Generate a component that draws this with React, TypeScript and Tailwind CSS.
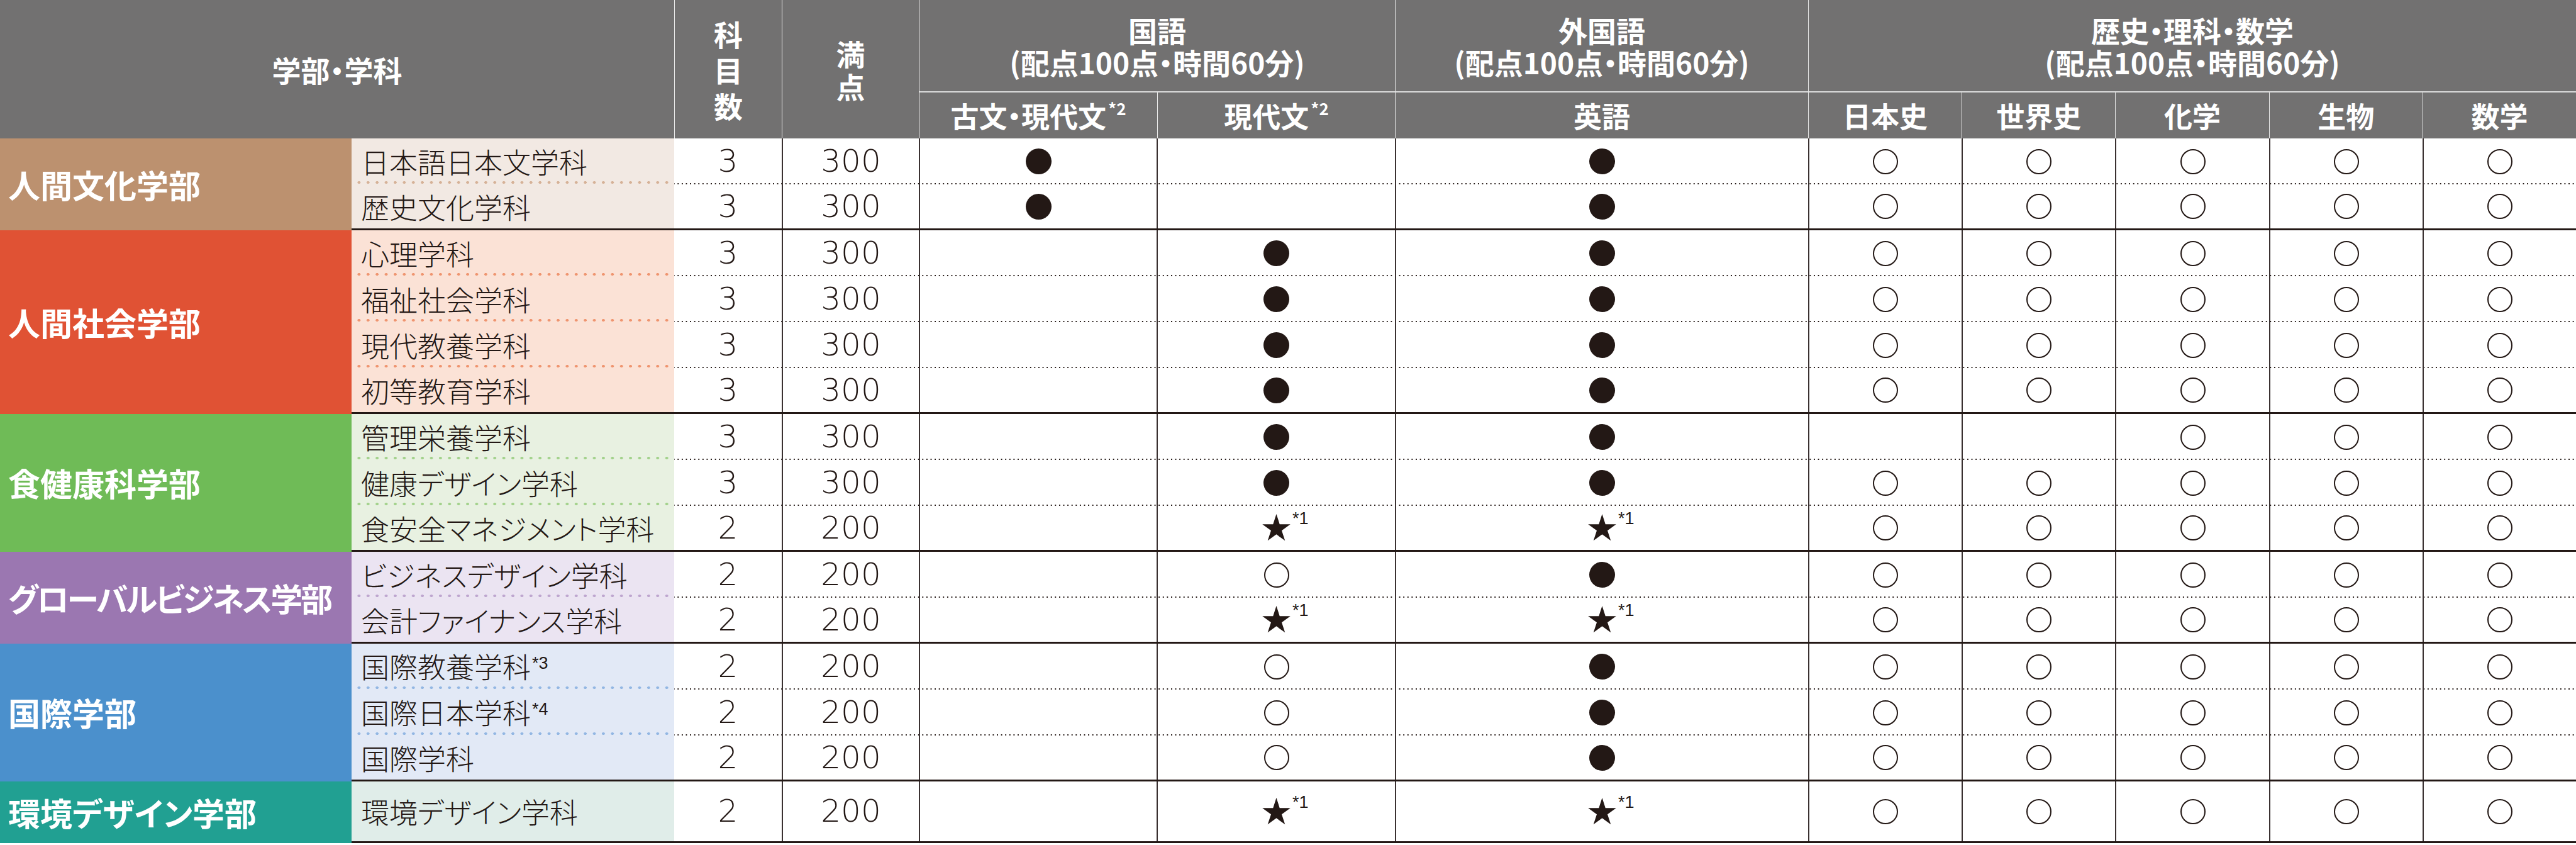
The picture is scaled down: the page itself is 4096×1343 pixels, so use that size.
import React from 'react';

type Mark = '' | 'fill' | 'open' | 'star';

type Row = {
  name: string;
  note?: string;
  count: string;
  total: string;
  kobun: Mark;
  gendai: Mark;
  eigo: Mark;
  rest: Mark[];
};

type Group = {
  name: string;
  label: string;
  sub: string;
  dot: string;
  track?: string;
  rows: Row[];
};

const all: Mark[] = ['open', 'open', 'open', 'open', 'open'];

// 学部ごとの色とデータ
const groups: Group[] = [
  {
    name: '人間文化学部',
    label: 'bg-[#bc916f]',
    sub: 'bg-[#f2e9e3]',
    dot: 'bg-[radial-gradient(circle,#d6b298_2px,transparent_2.5px)]',
    rows: [
      { name: '日本語日本文学科', count: '3', total: '300', kobun: 'fill', gendai: '', eigo: 'fill', rest: all },
      { name: '歴史文化学科', count: '3', total: '300', kobun: 'fill', gendai: '', eigo: 'fill', rest: all },
    ],
  },
  {
    name: '人間社会学部',
    label: 'bg-[#e05234]',
    sub: 'bg-[#fbe2d6]',
    dot: 'bg-[radial-gradient(circle,#ef9570_2px,transparent_2.5px)]',
    rows: [
      { name: '心理学科', count: '3', total: '300', kobun: '', gendai: 'fill', eigo: 'fill', rest: all },
      { name: '福祉社会学科', count: '3', total: '300', kobun: '', gendai: 'fill', eigo: 'fill', rest: all },
      { name: '現代教養学科', count: '3', total: '300', kobun: '', gendai: 'fill', eigo: 'fill', rest: all },
      { name: '初等教育学科', count: '3', total: '300', kobun: '', gendai: 'fill', eigo: 'fill', rest: all },
    ],
  },
  {
    name: '食健康科学部',
    label: 'bg-[#6fbb57]',
    sub: 'bg-[#e8f1e1]',
    dot: 'bg-[radial-gradient(circle,#a3d28c_2px,transparent_2.5px)]',
    rows: [
      { name: '管理栄養学科', count: '3', total: '300', kobun: '', gendai: 'fill', eigo: 'fill', rest: ['', '', 'open', 'open', 'open'] },
      { name: '健康デザイン学科', count: '3', total: '300', kobun: '', gendai: 'fill', eigo: 'fill', rest: all },
      { name: '食安全マネジメント学科', count: '2', total: '200', kobun: '', gendai: 'star', eigo: 'star', rest: all },
    ],
  },
  {
    name: 'グローバルビジネス学部',
    label: 'bg-[#9b77b1]',
    sub: 'bg-[#ebe4f2]',
    dot: 'bg-[radial-gradient(circle,#bea6cf_2px,transparent_2.5px)]',
    track: 'tracking-[-3px]',
    rows: [
      { name: 'ビジネスデザイン学科', count: '2', total: '200', kobun: '', gendai: 'open', eigo: 'fill', rest: all },
      { name: '会計ファイナンス学科', count: '2', total: '200', kobun: '', gendai: 'star', eigo: 'star', rest: all },
    ],
  },
  {
    name: '国際学部',
    label: 'bg-[#4b90cc]',
    sub: 'bg-[#e2e9f6]',
    dot: 'bg-[radial-gradient(circle,#93b7e3_2px,transparent_2.5px)]',
    rows: [
      { name: '国際教養学科', note: '*3', count: '2', total: '200', kobun: '', gendai: 'open', eigo: 'fill', rest: all },
      { name: '国際日本学科', note: '*4', count: '2', total: '200', kobun: '', gendai: 'open', eigo: 'fill', rest: all },
      { name: '国際学科', count: '2', total: '200', kobun: '', gendai: 'open', eigo: 'fill', rest: all },
    ],
  },
  {
    name: '環境デザイン学部',
    label: 'bg-[#21a092]',
    sub: 'bg-[#e0ede9]',
    dot: '',
    rows: [
      { name: '環境デザイン学科', count: '2', total: '200', kobun: '', gendai: 'star', eigo: 'star', rest: all },
    ],
  },
];

const MarkIcon: React.FC<{ m: Mark }> = ({ m }) => {
  if (m === 'fill') return <span className="block w-[41px] h-[41px] rounded-full bg-[#231815]" />;
  if (m === 'open')
    return <span className="block w-[40px] h-[40px] rounded-full border-2 border-[#231815]" />;
  if (m === 'star')
    return (
      <span className="relative block">
        <svg width="47" height="44" viewBox="0 0 100 94" className="block">
          <polygon
            points="50,0 61.2,34.5 97.6,34.5 68.2,55.9 79.4,90.5 50,69.1 20.6,90.5 31.8,55.9 2.4,34.5 38.8,34.5"
            fill="#231815"
          />
        </svg>
        <span className="absolute left-full -top-[6px] ml-[2px] text-[27px] leading-none font-['Liberation_Sans',sans-serif]">
          *1
        </span>
      </span>
    );
  return null;
};

const Cell: React.FC<{ w: string; line?: boolean; children?: React.ReactNode }> = ({ w, line, children }) => (
  <div className={`${w} flex items-center justify-center ${line ? 'border-l-2 border-[#3a3131]' : ''}`}>{children}</div>
);

const App: React.FC = () => {
  return (
    <div className="w-[4096px] h-[1343px] bg-white text-[#231815] font-['Noto_Sans_CJK_JP',sans-serif] [font-feature-settings:'palt']">
      {/* 見出し */}
      <div className="flex h-[220px] bg-[#727171] text-white font-bold">
        <div className="w-[1072px] flex items-center justify-center text-[46px]">学部・学科</div>
        <div className="w-[171px] border-l border-[#e8e8e8] flex flex-col items-center justify-center text-[46px] leading-[57px]">
          <span>科</span>
          <span>目</span>
          <span>数</span>
        </div>
        <div className="w-[218px] border-l border-[#e8e8e8] flex flex-col items-center justify-center text-[46px] leading-[52px]">
          <span>満</span>
          <span>点</span>
        </div>
        <div className="w-[757px] border-l border-[#e8e8e8] flex flex-col">
          <div className="h-[147px] border-b-2 border-[#dcdcdc] flex flex-col items-center justify-center text-[46px] leading-[51px]">
            <span>国語</span>
            <span>(配点100点・時間60分)</span>
          </div>
          <div className="flex-1 flex text-[45px]">
            <div className="w-[378px] flex items-center justify-center">
              古文・現代文<span className="relative -top-[12px] text-[26px] ml-[3px]">*2</span>
            </div>
            <div className="flex-1 border-l border-[#e8e8e8] flex items-center justify-center">
              現代文<span className="relative -top-[12px] text-[26px] ml-[3px]">*2</span>
            </div>
          </div>
        </div>
        <div className="w-[657px] border-l border-[#e8e8e8] flex flex-col">
          <div className="h-[147px] border-b-2 border-[#dcdcdc] flex flex-col items-center justify-center text-[46px] leading-[51px]">
            <span>外国語</span>
            <span>(配点100点・時間60分)</span>
          </div>
          <div className="flex-1 flex items-center justify-center text-[45px]">英語</div>
        </div>
        <div className="flex-1 border-l border-[#e8e8e8] flex flex-col">
          <div className="h-[147px] border-b-2 border-[#dcdcdc] flex flex-col items-center justify-center text-[46px] leading-[51px]">
            <span>歴史・理科・数学</span>
            <span>(配点100点・時間60分)</span>
          </div>
          <div className="flex-1 flex text-[45px]">
            {['日本史', '世界史', '化学', '生物', '数学'].map((s, i) => (
              <div
                key={s}
                className={`flex-1 flex items-center justify-center ${i > 0 ? 'border-l border-[#e8e8e8]' : ''}`}
              >
                {s}
              </div>
            ))}
          </div>
        </div>
      </div>

      {/* 本体 */}
      {groups.map((g, gi) => (
        <div key={g.name} className="flex">
          <div className={`w-[559px] shrink-0 flex items-center pl-[13px] ${g.label}`}>
            <span className={`text-white font-bold text-[51px] leading-none whitespace-nowrap ${g.track ?? ''}`}>
              {g.name}
            </span>
          </div>
          <div className="flex-1 flex flex-col">
            {g.rows.map((r, i) => {
              const last = i === g.rows.length - 1;
              const h = gi === groups.length - 1 ? 'h-[98px]' : 'h-[73px]';
              return (
                <div key={r.name} className={`flex ${h} ${last ? 'border-b-[3px] border-[#231815]' : ''}`}>
                  <div
                    className={`w-[513px] shrink-0 flex items-center pl-[15px] ${g.sub} ${
                      last ? '' : `${g.dot} bg-[length:14.4px_6px] bg-bottom bg-repeat-x`
                    }`}
                  >
                    <span className="text-[45px] font-light leading-none whitespace-nowrap">
                      {r.name}
                      {r.note && (
                        <span className="relative -top-[15px] text-[27px] ml-[2px] font-['Liberation_Sans',sans-serif]">
                          {r.note}
                        </span>
                      )}
                    </span>
                  </div>
                  <div
                    className={`flex-1 flex text-[50px] font-extralight font-['DejaVu_Sans',sans-serif] ${
                      last
                        ? ''
                        : 'bg-[linear-gradient(to_right,#231815_1.6px,transparent_1.6px)] bg-[length:6.6px_2px] bg-bottom bg-repeat-x'
                    }`}
                  >
                    <Cell w="w-[171px]">{r.count}</Cell>
                    <Cell w="w-[218px]" line>
                      {r.total}
                    </Cell>
                    <Cell w="w-[378px]" line>
                      <MarkIcon m={r.kobun} />
                    </Cell>
                    <Cell w="w-[379px]" line>
                      <MarkIcon m={r.gendai} />
                    </Cell>
                    <Cell w="w-[657px]" line>
                      <MarkIcon m={r.eigo} />
                    </Cell>
                    {r.rest.map((m, k) => (
                      <Cell key={k} w="flex-1" line>
                        <MarkIcon m={m} />
                      </Cell>
                    ))}
                  </div>
                </div>
              );
            })}
          </div>
        </div>
      ))}
    </div>
  );
};

export default App;
